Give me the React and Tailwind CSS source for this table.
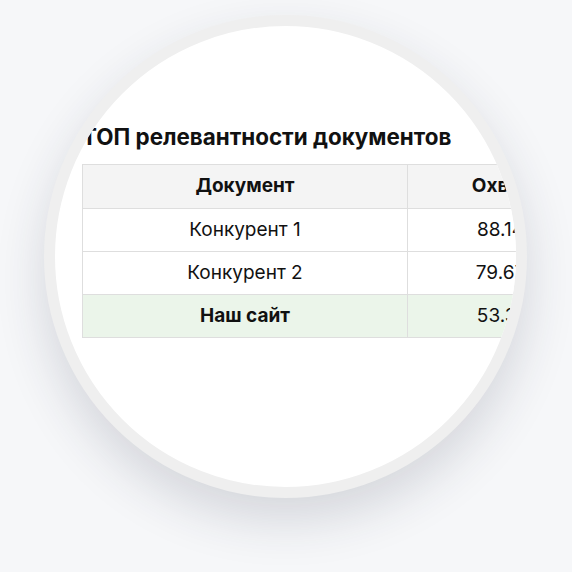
const rows = [
  { name: 'Конкурент 1', value: '88.14', ours: false },
  { name: 'Конкурент 2', value: '79.67', ours: false },
  { name: 'Наш сайт', value: '53.31', ours: true },
]

export default function App() {
  return (
    <div className="h-[572px] w-[572px] bg-[#f6f7f9] pl-[44px] pt-[15px] font-['Inter',sans-serif] text-[#111]">
      <div className="h-[483px] w-[483px] overflow-hidden rounded-full border-[11px] border-[#efefef] bg-white shadow-[0_22px_50px_rgba(40,45,70,0.16)]">
        <div className="w-[620px] pl-[27px] pt-[97px]">
          <h2 className="text-[22.4px] font-bold leading-[28px]">ТОП релевантности документов</h2>
          <table className="mt-[13px] border-collapse text-[19px]">
            <thead>
              <tr className="bg-[#f4f4f4]">
                <th className="h-[44px] w-[325px] border border-[#dedede] text-center font-bold">Документ</th>
                <th className="h-[44px] w-[186px] border border-[#dedede] text-center font-bold">Охват</th>
              </tr>
            </thead>
            <tbody>
              {rows.map((row) => (
                <tr key={row.name} className={row.ours ? 'bg-[#ebf5ea]' : 'bg-white'}>
                  <td className={`h-[43px] border border-[#dedede] text-center ${row.ours ? 'font-bold' : ''}`}>
                    {row.name}
                  </td>
                  <td className="h-[43px] border border-[#dedede] text-center">{row.value}</td>
                </tr>
              ))}
            </tbody>
          </table>
        </div>
      </div>
    </div>
  )
}
